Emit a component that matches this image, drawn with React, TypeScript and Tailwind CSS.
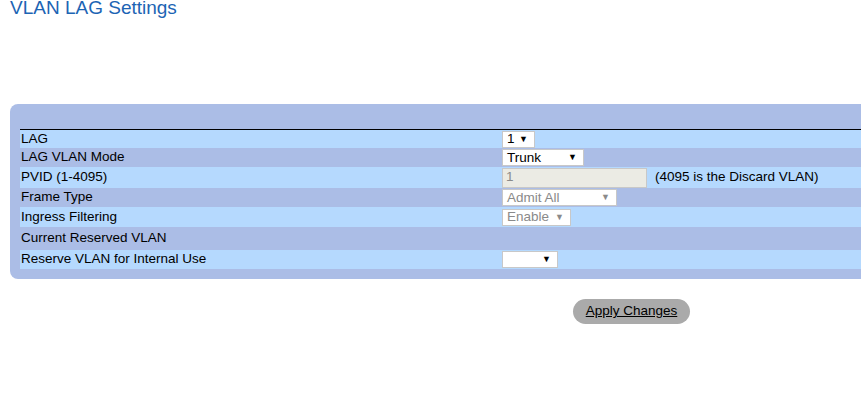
import React from "react";

const font = { fontFamily: '"Liberation Sans", Arial, sans-serif' };

function FakeSelect({ value, width, disabled }: { value: string; width: string; disabled?: boolean }) {
    return (
        <div
            className={`${width} h-[17px] bg-white border border-[#c8c8c8] flex items-center justify-between pl-[4px] pr-[6px] text-[13.5px] leading-none ${
                disabled ? "text-[#8a8a8a]" : "text-black"
            }`}
        >
            <span>{value}</span>
            <span className={`text-[9px] ${disabled ? "text-[#8a8a8a]" : "text-black"}`}>▼</span>
        </div>
    );
}

export default function App() {
    const rows = [
        { label: "LAG", h: "h-[18px]", light: true, control: <FakeSelect value="1" width="w-[33px]" /> },
        { label: "LAG VLAN Mode", h: "h-[19px]", light: false, control: <FakeSelect value="Trunk" width="w-[82px]" /> },
        {
            label: "PVID (1-4095)",
            h: "h-[21px]",
            light: true,
            control: (
                <div className="flex items-center">
                    <div className="w-[145px] h-[20px] bg-[#ebebe4] border border-[#c8c8c8] pl-[3px] text-[13.5px] text-[#8a8a8a] flex items-center">
                        1
                    </div>
                    <span className="ml-[8px] text-[13.5px] text-black">(4095 is the Discard VLAN)</span>
                </div>
            ),
        },
        { label: "Frame Type", h: "h-[19px]", light: false, control: <FakeSelect value="Admit All" width="w-[115px]" disabled /> },
        { label: "Ingress Filtering", h: "h-[20px]", light: true, control: <FakeSelect value="Enable" width="w-[69px]" disabled /> },
        { label: "Current Reserved VLAN", h: "h-[23px]", light: false, control: null },
        { label: "Reserve VLAN for Internal Use", h: "h-[19px]", light: true, control: <FakeSelect value="" width="w-[56px]" /> },
    ];

    return (
        <div className="w-[861px] h-[412px] overflow-hidden bg-white" style={font}>
            <h1 className="ml-[10px] -mt-[3px] text-[19px] leading-[22px] text-[#1c64b4]">VLAN LAG Settings</h1>

            <div className="mt-[85px] ml-[10px] w-[900px] rounded-l-[8px] bg-[#abbde6] pl-[10px] pb-[10px]">
                <div className="h-[26px] border-b border-black" />
                {rows.map((r) => (
                    <div
                        key={r.label}
                        className={`${r.h} flex items-center ${r.light ? "bg-[#b5d9fe]" : "bg-[#abbde6]"}`}
                    >
                        <div className="w-[482px] pl-[1px] text-[13.5px] text-black">{r.label}</div>
                        {r.control}
                    </div>
                ))}
            </div>

            <div className="mt-[19px] ml-[573px]">
                <button className="w-[117px] h-[25px] rounded-full bg-[#aaaaaa] text-[13.5px] text-black underline">
                    Apply Changes
                </button>
            </div>
        </div>
    );
}
